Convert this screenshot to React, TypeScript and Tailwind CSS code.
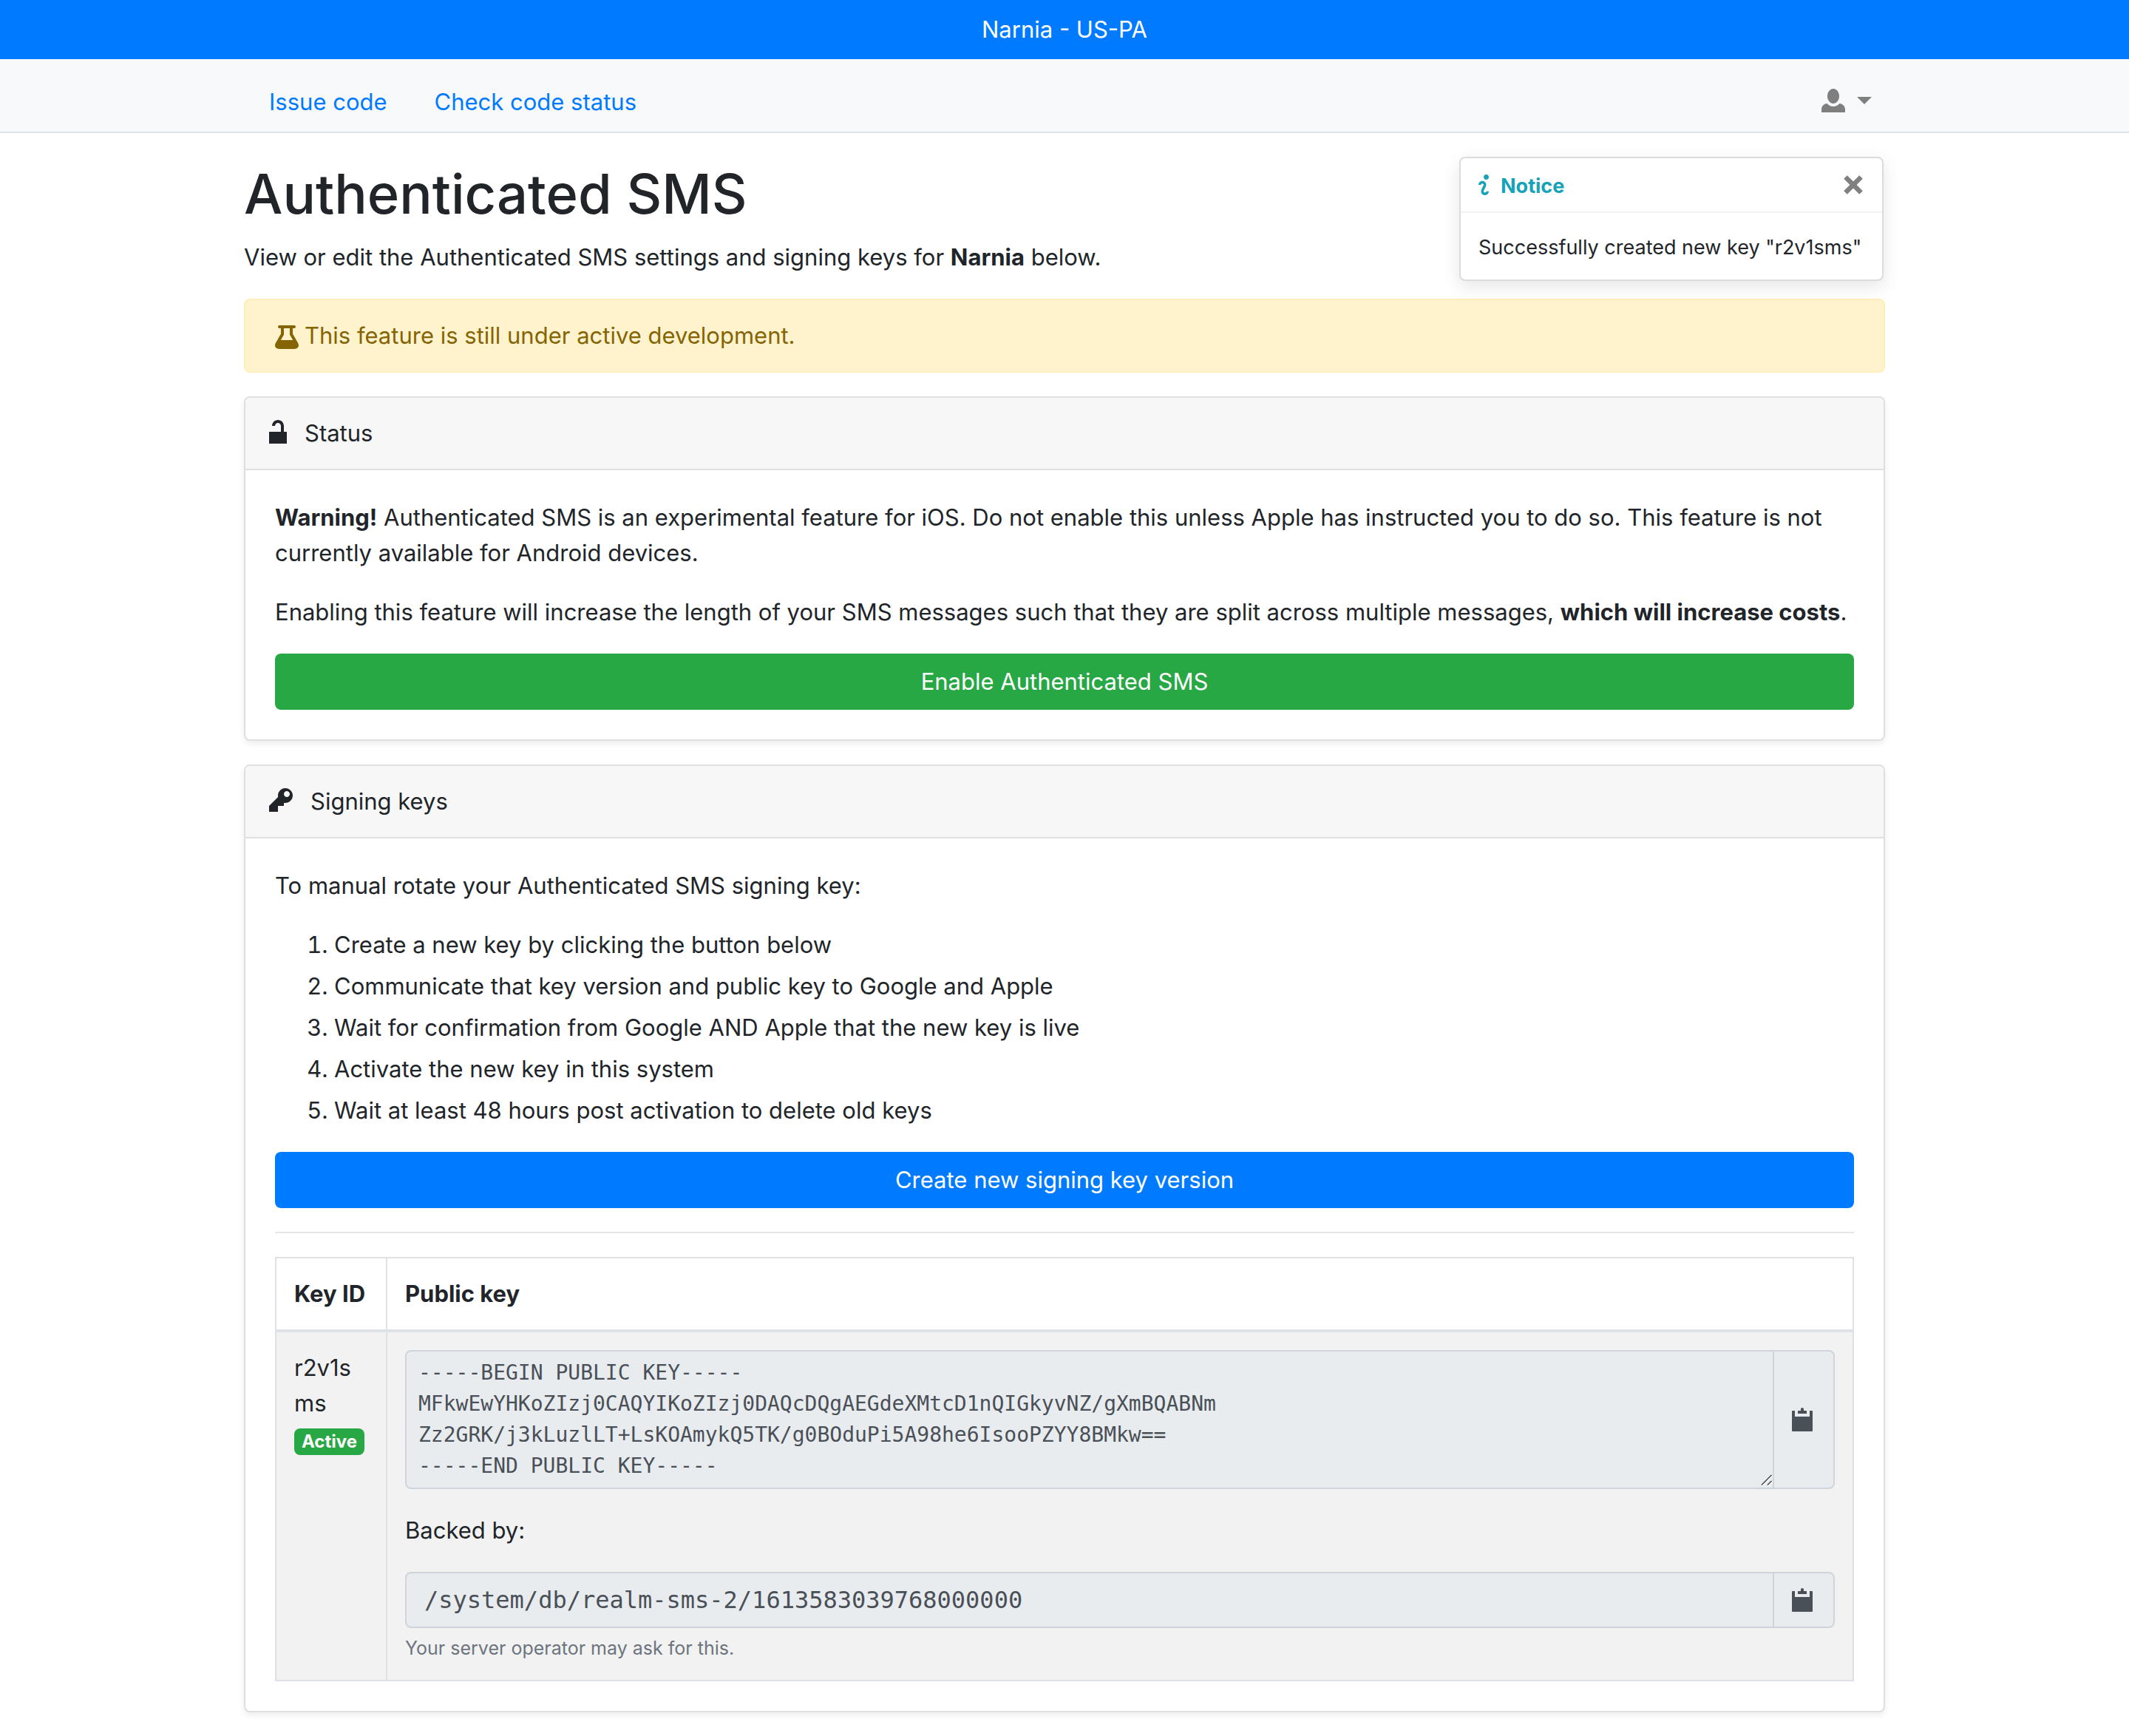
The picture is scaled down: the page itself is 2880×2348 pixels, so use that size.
import type { ReactNode } from "react";

const ICONS = {
  person:
    "M4 0c-1.1 0-2 1.12-2 2.5s.9 2.5 2 2.5 2-1.12 2-2.5-.9-2.5-2-2.5zm-2.09 5c-1.06.05-1.91.92-1.91 2v1h8v-1c0-1.08-.84-1.95-1.91-2-.54.61-1.28 1-2.09 1-.81 0-1.55-.39-2.09-1z",
  beaker:
    "M1.5 0a.5.5 0 0 0 0 1h.5v1.9l-1.78 3.1c-.48.8-.22 2 1.28 2h5c1.5 0 1.76-1.2 1.28-2l-1.78-3.1v-1.9h.5a.5.5 0 0 0 0-1zM3 1h2v2.2l1.05 1.8h-4.1l1.05-1.8z",
  unlocked:
    "M3 0c-1.1 0-2 .9-2 2h1c0-.56.44-1 1-1s1 .44 1 1v2h-4v4h6v-4h-1v-2c0-1.1-.9-2-2-2z",
  key: "M5.5 0c-1.38 0-2.5 1.12-2.5 2.5 0 .16 0 .32.03.47l-3.03 3.03v2h3v-2h2v-1l.03-.03c.15.03.31.03.47.03 1.38 0 2.5-1.12 2.5-2.5s-1.12-2.5-2.5-2.5zm.5 1c.55 0 1 .45 1 1s-.45 1-1 1-1-.45-1-1 .45-1 1-1z",
  info: "M3 0c-.55 0-1 .45-1 1s.45 1 1 1 1-.45 1-1-.45-1-1-1zm-1.5 2.5c-.83 0-1.5.67-1.5 1.5h1c0-.28.22-.5.5-.5s.5.22.5.5-1 1.64-1 2.5c0 .86.67 1.5 1.5 1.5s1.5-.67 1.5-1.5h-1c0 .28-.22.5-.5.5s-.5-.22-.5-.5c0-.36 1-1.84 1-2.5 0-.81-.67-1.5-1.5-1.5z",
  clipboard:
    "M3.5 0c-.28 0-.5.22-.5.5v.5h-.75c-.14 0-.25.11-.25.25v.75h3v-.75c0-.14-.11-.25-.25-.25h-.75v-.5c0-.28-.22-.5-.5-.5zm-3.25 1c-.14 0-.25.11-.25.25v6.5c0 .14.11.25.25.25h6.5c.14 0 .25-.11.25-.25v-6.5c0-.14-.11-.25-.25-.25h-.75v2h-5v-2h-.75z",
};

function Icon({ name, units = 8, className }: { name: keyof typeof ICONS; units?: number; className: string }) {
  return (
    <svg viewBox={`0 0 ${units} 8`} fill="currentColor" fillRule="evenodd" aria-hidden="true" className={`shrink-0 ${className}`}>
      <path d={ICONS[name]} />
    </svg>
  );
}

function Card({ icon, title, children }: { icon: ReactNode; title: string; children: ReactNode }) {
  return (
    <section className="mt-8 overflow-hidden rounded-lg border-2 border-[#dfdfdf] bg-white shadow-[0_4px_8px_rgba(0,0,0,0.075)]">
      <h2 className="flex items-center gap-6 border-b-2 border-[#dfdfdf] bg-[#f7f7f7] px-8 py-6">
        {icon}
        {title}
      </h2>
      <div className="p-10">{children}</div>
    </section>
  );
}

function CopyButton({ label }: { label: string }) {
  return (
    <button
      type="button"
      aria-label={label}
      className="flex items-center rounded-r-lg border-2 border-l-0 border-[#ced4da] bg-[#e9ecef] px-6 text-[#495057]"
    >
      <Icon name="clipboard" className="size-8" />
    </button>
  );
}

function Toast() {
  return (
    <div
      role="alert"
      className="absolute top-8 right-0.5 w-[574px] rounded-lg border-2 border-[#dcdcdc] bg-white text-[27px] leading-[42px] shadow-[0_8px_24px_rgba(0,0,0,0.1)]"
    >
      <div className="flex h-[74px] items-center border-b-2 border-[#f2f2f2] px-6">
        <Icon name="info" units={4} className="mr-4 h-7 w-[14px] text-[#17a2b8]" />
        <strong className="grow pt-1 font-bold text-[#17a2b8]">Notice</strong>
        <button type="button" aria-label="Close" className="mr-0.5 text-[#808080]">
          <svg viewBox="0 0 26 26" className="size-[26px]" fill="none" stroke="currentColor" strokeWidth="6.5" aria-hidden="true">
            <path d="M2.5 2.5 23.5 23.5M23.5 2.5 2.5 23.5" />
          </svg>
        </button>
      </div>
      <p className="px-6 pt-[26px] pb-[22px] whitespace-nowrap">Successfully created new key "r2v1sms"</p>
    </div>
  );
}

const STEPS = [
  "Create a new key by clicking the button below",
  "Communicate that key version and public key to Google and Apple",
  "Wait for confirmation from Google AND Apple that the new key is live",
  "Activate the new key in this system",
  "Wait at least 48 hours post activation to delete old keys",
];

const PUBLIC_KEY = `-----BEGIN PUBLIC KEY-----
MFkwEwYHKoZIzj0CAQYIKoZIzj0DAQcDQgAEGdeXMtcD1nQIGkyvNZ/gXmBQABNm
Zz2GRK/j3kLuzlLT+LsKOAmykQ5TK/g0BOduPi5A98he6IsooPZYY8BMkw==
-----END PUBLIC KEY-----`;

export default function App() {
  return (
    <div className="min-h-screen bg-white pb-8 font-['Inter','Liberation_Sans',sans-serif] text-[31px] leading-[48px] text-[#212529]">
      <div className="bg-[#007bff] py-4 text-center text-white">Narnia - US-PA</div>

      <header className="border-b-2 border-[#dee2e6] bg-[#f8f9fa]">
        <nav className="mx-auto flex w-full max-w-[2220px] items-center justify-between px-[34px] pt-[34px] pb-4">
          <div className="flex gap-16 text-[#007bff]">
            <a href="#issue">Issue code</a>
            <a href="#status">Check code status</a>
          </div>
          <button type="button" aria-label="Account menu" className="-mr-4 flex items-center gap-4 text-[#7f7f7f]">
            <Icon name="person" className="mb-1 size-8" />
            <svg viewBox="0 0 20 10" className="mb-1 h-2.5 w-5" fill="currentColor" aria-hidden="true">
              <path d="M0 0h20L10 10z" />
            </svg>
          </button>
        </nav>
      </header>

      <main className="relative mx-auto w-full max-w-[2220px] pt-8">
        <Toast />
        <h1 className="pt-0.5 pb-3.5 text-[74px] leading-[96px] font-medium">Authenticated SMS</h1>
        <p>
          View or edit the Authenticated SMS settings and signing keys for <strong className="font-bold">Narnia</strong> below.
        </p>

        <div className="mt-8 flex items-center gap-2 rounded-lg border-2 border-[#ffeeba] bg-[#fff3cd] px-10 py-6 text-[#856404]">
          <Icon name="beaker" className="mt-1 size-8" />
          This feature is still under active development.
        </div>

        <Card title="Status" icon={<Icon name="unlocked" units={6} className="mb-1 h-8 w-6" />}>
          <p>
            <strong className="font-bold">Warning!</strong> Authenticated SMS is an experimental feature for iOS. Do not enable this unless
            Apple has instructed you to do so. This feature is not currently available for Android devices.
          </p>
          <p className="mt-8">
            Enabling this feature will increase the length of your SMS messages such that they are split across multiple messages,{" "}
            <strong className="font-bold">which will increase costs</strong>.
          </p>
          <button type="button" className="mt-8 block h-[76px] w-full rounded-lg bg-[#28a745] text-center text-white">
            Enable Authenticated SMS
          </button>
        </Card>

        <Card title="Signing keys" icon={<Icon name="key" className="mb-1 size-8" />}>
          <p>To manual rotate your Authenticated SMS signing key:</p>
          <ol className="mt-8 flex list-decimal flex-col gap-2 pl-20">
            {STEPS.map((step) => (
              <li key={step}>{step}</li>
            ))}
          </ol>
          <button type="button" className="mt-8 block h-[76px] w-full rounded-lg bg-[#007bff] text-center text-white">
            Create new signing key version
          </button>
          <hr className="my-8 border-t-2 border-[#e5e5e5]" />

          <table className="w-full table-fixed border-separate border-spacing-0 border-t-2 border-l-2 border-[#dee2e6] text-left">
            <colgroup>
              <col className="w-[150px]" />
              <col />
            </colgroup>
            <thead>
              <tr>
                <th scope="col" className="border-r-2 border-b-4 border-[#dee2e6] py-6 pl-6 font-bold whitespace-nowrap">
                  Key ID
                </th>
                <th scope="col" className="border-r-2 border-b-4 border-[#dee2e6] p-6 font-bold">
                  Public key
                </th>
              </tr>
            </thead>
            <tbody>
              <tr className="bg-[#f2f2f2]">
                <td className="border-r-2 border-b-2 border-[#dee2e6] p-6 align-top">
                  <div className="break-all">r2v1sms</div>
                  <span className="mt-2.5 inline-block rounded-lg bg-[#28a745] px-2.5 align-top text-[24px] leading-[36px] font-bold text-white">
                    Active
                  </span>
                </td>
                <td className="border-r-2 border-b-2 border-[#dee2e6] p-6 align-top">
                  <div className="flex items-stretch">
                    <div className="relative grow">
                      <textarea
                        aria-label="Public key"
                        readOnly
                        rows={4}
                        value={PUBLIC_KEY}
                        className="block w-full resize-none overflow-hidden rounded-l-lg border-2 border-[#ced4da] bg-[#e9ecef] px-4 py-2 font-['DejaVu_Sans_Mono','Liberation_Mono',monospace] text-[28px] leading-[42px] text-[#495057]"
                      />
                      <svg viewBox="0 0 16 16" className="absolute right-0.5 bottom-1 size-4" fill="none" strokeWidth="1.5" aria-hidden="true">
                        <path d="M2 15.5 15.5 2M10 15.5 15.5 10" stroke="#fff" />
                        <path d="M1 14.5 14.5 1M9 14.5 14.5 9" stroke="#444" />
                      </svg>
                    </div>
                    <CopyButton label="Copy public key" />
                  </div>
                  <label htmlFor="backed-by" className="my-8 block">
                    Backed by:
                  </label>
                  <div className="flex items-stretch">
                    <input
                      id="backed-by"
                      type="text"
                      readOnly
                      value="/system/db/realm-sms-2/1613583039768000000"
                      className="h-[76px] min-w-0 grow rounded-l-lg border-2 border-[#ced4da] bg-[#e9ecef] px-6 font-['DejaVu_Sans_Mono','Liberation_Mono',monospace] text-[32px] text-[#495057]"
                    />
                    <CopyButton label="Copy key path" />
                  </div>
                  <small className="mt-2 block text-[25px] leading-[38px] text-[#6c757d]">Your server operator may ask for this.</small>
                </td>
              </tr>
            </tbody>
          </table>
        </Card>
      </main>
    </div>
  );
}
